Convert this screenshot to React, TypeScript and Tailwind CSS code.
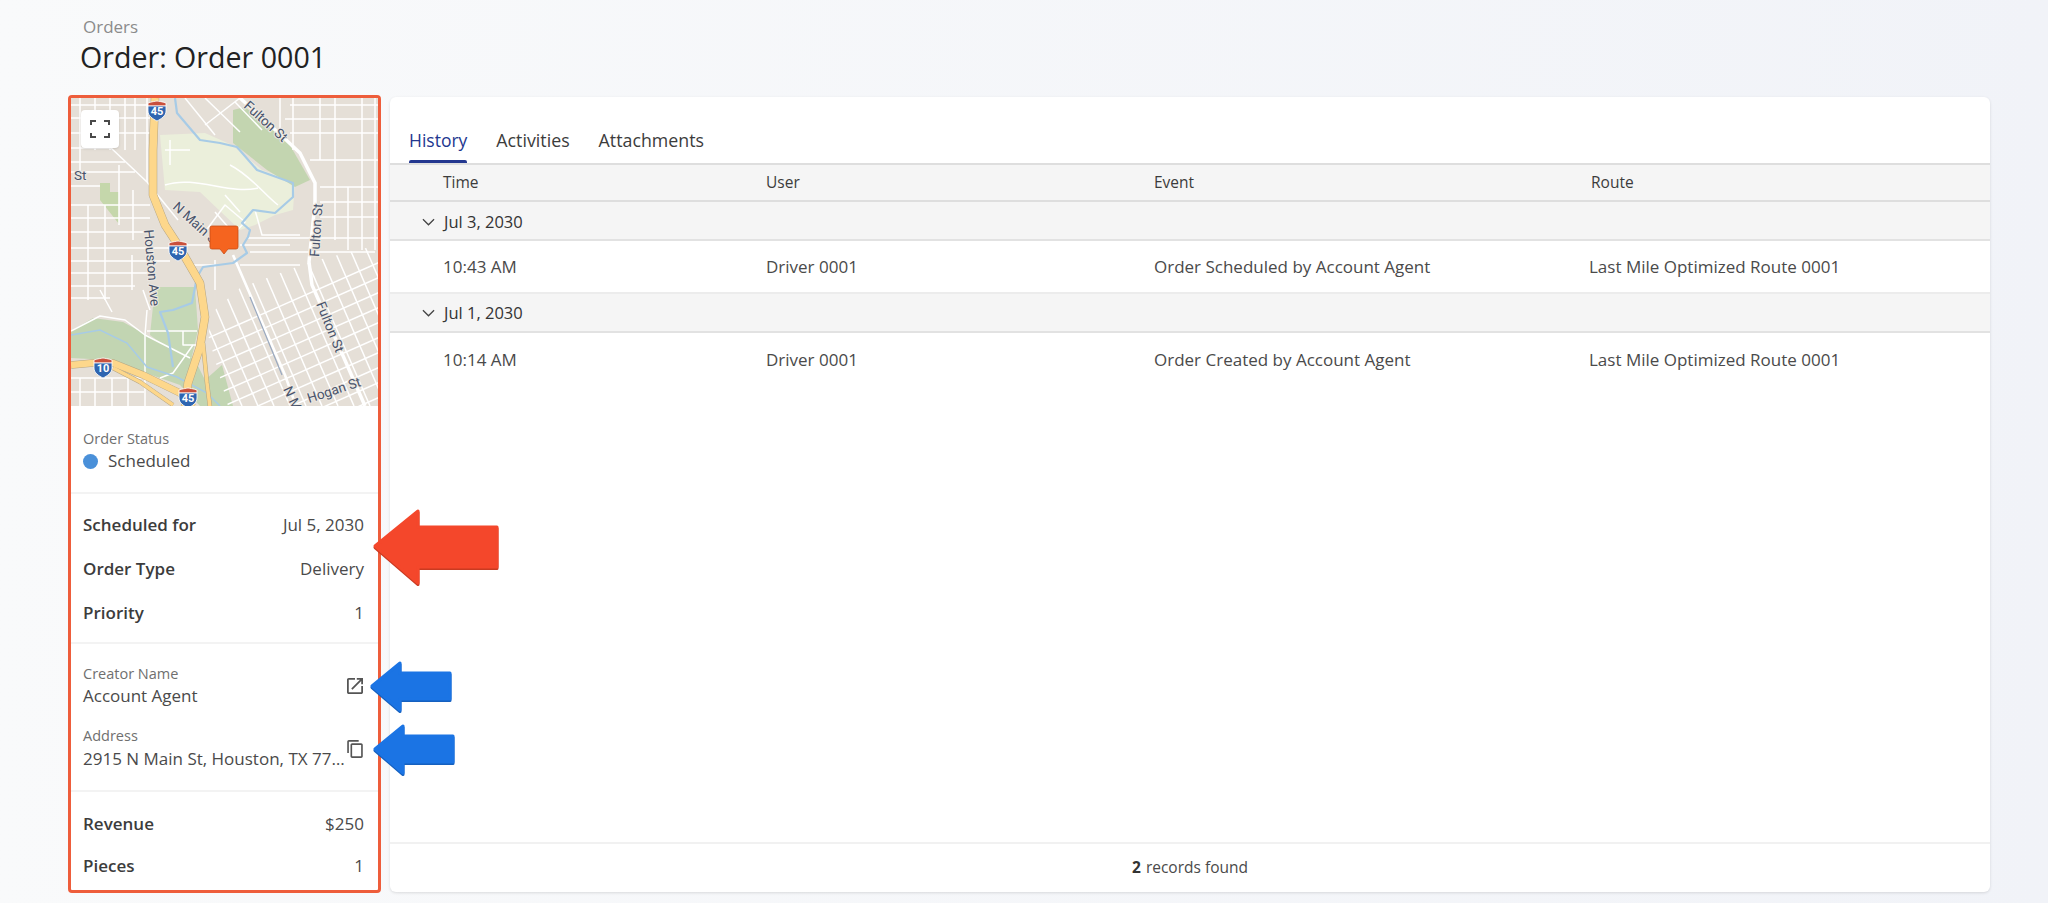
import { ReactNode } from "react"

const font = { fontFamily: '"Open Sans", "Noto Sans", sans-serif' }

// Street lines in page coordinates, the map's viewBox uses the same numbers.
const streets = [
  // upper left blocks
  "M80 98V180", "M95 98V150", "M110 98V150", "M125 98V150", "M135 98V150", "M147 98V182",
  "M71 105H150", "M71 118H150", "M71 133H150", "M71 148H110", "M71 162H125", "M71 172H135", "M71 186H100", "M71 205H150",
  "M119 165V225", "M133 190V240", "M88 205V300", "M105 205V300", "M71 218H150", "M71 232H150", "M71 248H170", "M71 261H170", "M71 273H150", "M71 286H135", "M71 298H110",
  "M110 147L147 182", "M147 182L178 220", "M100 290L112 312", "M132 255V290", "M143 290L150 310",
  // lower left
  "M71 331L100 316L125 320L145 335L190 358", "M147 310L145 335V406", "M147 331H197",
  "M71 378H144", "M71 392H144", "M80 378V406", "M95 378V406", "M112 378V406", "M128 378V406",
  "M183 331V345H197", "M160 378L173 373L193 345",
  // middle, around the marker
  "M178 245H210", "M205 232L225 205L245 222L228 240", "M215 212L235 235", "M225 195L240 212", "M240 245H290", "M248 238H378",
  "M250 252H375", "M240 265H300", "M255 210L262 235H300", "M185 265H215", "M215 260V290",
  // upper right grid
  "M280 98V137", "M293 98V150", "M320 98V160", "M335 98V160", "M362 98V250", "M375 98V250",
  "M290 105H378", "M285 119H378", "M290 133H378", "M310 160H378", "M320 187H378", "M320 202H378", "M320 217H378", "M335 160V240", "M348 187V250",
  "M235 102L262 130", "M205 98L240 132", "M185 98L215 135", "M240 98L205 125",
  // park paths
  "M165 150H190", "M170 140V165", "M165 185C195 175 230 195 258 188", "M230 165C250 175 265 195 278 205",
]

// Rotated blocks below the river, generated and clipped to that part of the map.
const longLines = Array.from({ length: 13 }, (_, i) => 170 + i * 16)
const crossLines = Array.from({ length: 14 }, (_, i) => 270 + i * 15)

function Shield({ x, y, label }: { x: number; y: number; label: string }) {
  return (
    <g transform={`translate(${x} ${y})`}>
      <path d="M-9 -6C-5 -7.5 -2 -7.5 0 -8C2 -7.5 5 -7.5 9 -6V-3H-9Z" fill="#c9503c" stroke="#fff" strokeWidth="0.8" />
      <path d="M-9 -3H9V2C9 7 4 10 0 12C-4 10 -9 7 -9 2Z" fill="#2f65b0" stroke="#fff" strokeWidth="0.8" />
      <text x="0" y="5.5" textAnchor="middle" fontSize="11" fontWeight="700" fill="#fff" fontFamily="Roboto, sans-serif">
        {label}
      </text>
    </g>
  )
}

function MapLabel({ transform, children }: { transform: string; children: ReactNode }) {
  return (
    <text
      transform={transform}
      fontSize="13.5"
      fill="#48536b"
      stroke="#ece8e2"
      strokeWidth="2"
      paintOrder="stroke"
      fontFamily="Roboto, sans-serif"
    >
      {children}
    </text>
  )
}

function RouteMap() {
  return (
    <svg viewBox="71 98 307 308" className="block h-[308px] w-[307px]">
      <defs>
        <clipPath id="lower-blocks">
          <polygon points="208,335 215,310 240,288 310,262 378,245 378,406 228,406" />
        </clipPath>
      </defs>
      <rect x="71" y="98" width="307" height="308" fill="#e5dfd7" />

      {/* parks */}
      <path d="M160 135L205 133L232 145L262 170L295 182L293 210L275 215L255 225L240 230L200 192L165 190Z" fill="#ebefdb" />
      <path d="M233 110L245 107L287 140L310 180L295 187L267 170L233 143Z" fill="#c3d5b0" />
      <path d="M155 287H195L198 330L190 365L150 335Z" fill="#c5d8b6" />
      <path d="M71 331L93 318L123 322L143 333L195 360L205 380L222 365L233 406H200L180 385L143 372L110 360L71 358Z" fill="#c2d5b2" />
      <path d="M100 183H110V192H119V224L100 200Z" fill="#c5d7ab" />

      {streets.map((d) => (
        <path key={d} d={d} fill="none" stroke="#fff" strokeWidth="1.5" strokeLinejoin="round" />
      ))}
      <g clipPath="url(#lower-blocks)" stroke="#fff" strokeWidth="1.5">
        {longLines.map((x) => (
          <line key={x} x1={x} y1="240" x2={x + 72} y2="406" />
        ))}
        {crossLines.map((y) => (
          <line key={y} x1="190" y1={y + 76} x2="380" y2={y - 8} />
        ))}
      </g>

      {/* Fulton St and N Main St */}
      <path d="M240 98L283 137L300 153L315 183V203L309 262L312 285L365 406" fill="none" stroke="#fff" strokeWidth="3.5" />
      <path d="M233 255L285 375L296 406" fill="none" stroke="#fff" strokeWidth="2.6" />
      <path d="M250 297L282 375" stroke="#98a8c0" strokeWidth="1.2" />

      {/* water */}
      <path
        d="M175 98L177 113L200 140L220 143L237 147L257 170L293 183V197L275 213L253 210L242 223L250 230L248 237L243 245L247 253L233 263L203 267L197 277L192 303L173 310L160 312L163 320L168 333L173 367"
        fill="none"
        stroke="#a7cbe6"
        strokeWidth="2.2"
        strokeLinejoin="round"
      />
      <path d="M71 335L100 330L127 343L147 367L177 377L207 393L220 406" fill="none" stroke="#a7cbe6" strokeWidth="1.5" />

      {/* freeways */}
      <g fill="none" strokeLinejoin="round">
        <path d="M71 365L93 363H113L143 375L180 393L193 407" stroke="#b5a583" strokeWidth="7.5" />
        <path d="M113 368L140 382L173 405" stroke="#b5a583" strokeWidth="4.5" />
        <path d="M155 98L153 150V195L165 225L178 245L185 257L200 283L205 317L200 347L188 383L185 407" stroke="#b5a583" strokeWidth="8.5" />
        <path d="M203 343L207 383L210 407" stroke="#b5a583" strokeWidth="4.5" />
        <path d="M71 365L93 363H113L143 375L180 393L193 407" stroke="#fdd78b" strokeWidth="6.5" />
        <path d="M113 368L140 382L173 405" stroke="#fdd78b" strokeWidth="3.5" />
        <path d="M155 98L153 150V195L165 225L178 245L185 257L200 283L205 317L200 347L188 383L185 407" stroke="#fdd78b" strokeWidth="7.5" />
        <path d="M203 343L207 383L210 407" stroke="#fdd78b" strokeWidth="3.5" />
      </g>

      <Shield x={157} y={109} label="45" />
      <Shield x={178} y={249} label="45" />
      <Shield x={188} y={396} label="45" />
      <Shield x={103} y={366} label="10" />

      <MapLabel transform="translate(243 107) rotate(42)">Fulton St</MapLabel>
      <MapLabel transform="translate(74 180)">St</MapLabel>
      <MapLabel transform="translate(172 208) rotate(42)">N Main S</MapLabel>
      <MapLabel transform="translate(144 230) rotate(85)">Houston Ave</MapLabel>
      <MapLabel transform="translate(319 257) rotate(-86)">Fulton St</MapLabel>
      <MapLabel transform="translate(316 304) rotate(68)">Fulton St</MapLabel>
      <MapLabel transform="translate(283 389) rotate(65)">N Main</MapLabel>
      <MapLabel transform="translate(309 403) rotate(-18)">Hogan St</MapLabel>

      {/* order marker */}
      <path
        d="M212 226H236Q238 226 238 228V247Q238 249 236 249H228L224 254L220 249H212Q210 249 210 247V228Q210 226 212 226Z"
        fill="#f5641f"
        stroke="#c94d15"
        strokeWidth="0.8"
      />
    </svg>
  )
}

function Row({ label, value }: { label: string; value: string }) {
  return (
    <div className="flex h-[44px] items-center justify-between">
      <span className="text-[17px] font-semibold text-[#3c3c3c]">{label}</span>
      <span className="text-[17px] text-[#4a4a4a]">{value}</span>
    </div>
  )
}

const columns = "grid grid-cols-[323px_388px_437px_1fr] pl-[53px]"

function GroupRow({ date, offset }: { date: string; offset: string }) {
  return (
    <div className={`flex h-[39px] shrink-0 items-center border-b-[2px] border-[#e2e2e2] bg-[#f5f5f5] pl-[32px] text-[16.5px] font-medium text-[#333] ${offset}`}>
      <svg viewBox="0 0 14 8" className="mr-[9px] h-[8px] w-[13px]" fill="none" stroke="#444" strokeWidth="1.4">
        <path d="M1 1L7 7L13 1" />
      </svg>
      {date}
    </div>
  )
}

function EventRow({ time, event, className }: { time: string; event: string; className: string }) {
  return (
    <div className={`${columns} ${className} shrink-0 items-center text-[17px] text-[#4a4a4a]`}>
      <span>{time}</span>
      <span>Driver 0001</span>
      <span>{event}</span>
      <span className="-ml-[2px]">Last Mile Optimized Route 0001</span>
    </div>
  )
}

function Arrow({ d, fill, shade, width, height, className }: { d: string; fill: string; shade: string; width: number; height: number; className: string }) {
  return (
    <svg viewBox={`0 0 ${width} ${height}`} width={width} height={height} className={`absolute ${className}`}>
      <path d={d} fill={shade} stroke={shade} strokeWidth="3" strokeLinejoin="round" transform="translate(0 1.5)" />
      <path d={d} fill={fill} stroke={fill} strokeWidth="3" strokeLinejoin="round" />
    </svg>
  )
}

export default function App() {
  return (
    <div className="relative h-[903px] w-[2048px] overflow-hidden bg-gradient-to-r from-[#f9fafb] to-[#f1f3f8] pl-[68px] pr-[58px] pt-[17px]" style={font}>
      <div className="h-[20px] pl-[15px] text-[17px] leading-[20px] text-[#8b8b8b]">Orders</div>
      <h1 className="mb-[18px] h-[40px] pl-[12px] text-[28.6px] leading-[40px] text-[#222]">Order: Order 0001</h1>

      <div className="flex gap-[9px]">
        {/* order summary panel */}
        <div className="h-[798px] w-[313px] shrink-0 rounded-[4px] border-[3px] border-[#ee5d3b] bg-white">
          <div className="relative">
            <RouteMap />
            <button className="absolute left-[10px] top-[12px] flex h-[38px] w-[38px] items-center justify-center rounded-[4px] bg-white shadow-sm">
              <svg viewBox="0 0 20 18" className="h-[18px] w-[20px]" fill="none" stroke="#4a4a4a" strokeWidth="2">
                <path d="M1 5V1H6M14 1H19V5M19 13V17H14M6 17H1V13" />
              </svg>
            </button>
          </div>

          <div className="border-b-[2px] border-[#f3f3f3] pb-[19px] pl-[12px] pt-[23px]">
            <div className="text-[14.5px] leading-[20px] text-[#6f6f6f]">Order Status</div>
            <div className="flex items-center gap-[10px] text-[17px] leading-[24px] text-[#4a4a4a]">
              <span className="h-[15px] w-[15px] rounded-full bg-[#4a90d9]" />
              Scheduled
            </div>
          </div>

          <div className="border-b-[2px] border-[#f3f3f3] pb-[7px] pl-[12px] pr-[14px] pt-[9px]">
            <Row label="Scheduled for" value="Jul 5, 2030" />
            <Row label="Order Type" value="Delivery" />
            <Row label="Priority" value="1" />
          </div>

          <div className="border-b-[2px] border-[#f3f3f3] pb-[19px] pl-[12px] pr-[14px] pt-[20px]">
            <div className="flex items-center justify-between">
              <div>
                <div className="text-[14.5px] leading-[20px] text-[#6f6f6f]">Creator Name</div>
                <div className="text-[17px] leading-[24px] text-[#4a4a4a]">Account Agent</div>
              </div>
              <svg viewBox="3 3 18 18" className="mr-[1px] h-[16px] w-[16px] fill-[#555]">
                <path d="M19 19H5V5h7V3H5c-1.11 0-2 .9-2 2v14c0 1.1.89 2 2 2h14c1.1 0 2-.9 2-2v-7h-2v7zM14 3v2h3.59l-9.83 9.83 1.41 1.41L19 6.41V10h2V3h-7z" />
              </svg>
            </div>
            <div className="mt-[18px] flex justify-between">
              <div className="min-w-0">
                <div className="text-[14.5px] leading-[20px] text-[#6f6f6f]">Address</div>
                <div className="mt-[1px] w-[262px] truncate text-[17px] leading-[24px] text-[#4a4a4a]">2915 N Main St, Houston, TX 77009</div>
              </div>
              <svg viewBox="2 1 19 22" className="mr-[1px] mt-[14px] h-[18px] w-[16px] fill-[#555]">
                <path d="M16 1H4c-1.1 0-2 .9-2 2v14h2V3h12V1zm3 4H8c-1.1 0-2 .9-2 2v14c0 1.1.9 2 2 2h11c1.1 0 2-.9 2-2V7c0-1.1-.9-2-2-2zm0 16H8V7h11v14z" />
              </svg>
            </div>
          </div>

          <div className="pl-[12px] pr-[14px] pt-[11px]">
            <div className="flex h-[42px] items-center justify-between">
              <span className="text-[17px] font-semibold text-[#3c3c3c]">Revenue</span>
              <span className="text-[17px] text-[#4a4a4a]">$250</span>
            </div>
            <div className="flex h-[42px] items-center justify-between">
              <span className="text-[17px] font-semibold text-[#3c3c3c]">Pieces</span>
              <span className="text-[17px] text-[#4a4a4a]">1</span>
            </div>
          </div>
        </div>

        {/* history card */}
        <div className="mt-[2px] flex h-[795px] w-[1600px] flex-col overflow-hidden rounded-[6px] bg-white shadow-[0_1px_3px_rgba(0,0,0,0.12)]">
          <div className="flex h-[68px] shrink-0 items-end gap-[29px] border-b-[2px] border-[#dedede] pl-[19px] text-[17.8px]">
            <div className="flex h-[36px] flex-col justify-between">
              <span className="text-[17.5px] font-medium text-[#23378f]">History</span>
              <span className="h-[3px] rounded-t-[2px] bg-[#23378f]" />
            </div>
            <span className="h-[36px] font-medium text-[#3c3c3c]">Activities</span>
            <span className="h-[36px] font-medium text-[#3c3c3c]">Attachments</span>
          </div>

          <div className={`${columns} h-[37px] shrink-0 items-center border-b-[2px] border-[#dedede] bg-[#f5f5f5] text-[15.5px] font-medium text-[#3c3c3c]`}>
            <span>Time</span>
            <span>User</span>
            <span>Event</span>
            <span>Route</span>
          </div>

          <GroupRow date="Jul 3, 2030" offset="pt-[3px]" />
          <EventRow time="10:43 AM" event="Order Scheduled by Account Agent" className="h-[53px] border-b-[2px] border-[#ececec]" />
          <GroupRow date="Jul 1, 2030" offset="pt-[1px]" />
          <EventRow time="10:14 AM" event="Order Created by Account Agent" className="h-[54px]" />

          <div className="mt-auto flex h-[50px] shrink-0 items-center justify-center border-t-[2px] border-[#f1f1f1] text-[15.5px] text-[#4a4a4a]">
            <span className="mr-[5px] font-bold text-[#333]">2</span>records found
          </div>
        </div>
      </div>

      {/* annotation arrows */}
      <Arrow
        className="left-[372px] top-[505px]"
        width={136}
        height={84}
        d="M3 41L46 6V22H125V62H46V78Z"
        fill="#f4472b"
        shade="#c93a21"
      />
      <Arrow
        className="left-[370px] top-[660px]"
        width={88}
        height={54}
        d="M2 26L30 3V13H80V39H30V50Z"
        fill="#1b74e4"
        shade="#1560bf"
      />
      <Arrow
        className="left-[373px] top-[723px]"
        width={88}
        height={54}
        d="M2 26L30 3V13H80V39H30V50Z"
        fill="#1b74e4"
        shade="#1560bf"
      />
    </div>
  )
}
